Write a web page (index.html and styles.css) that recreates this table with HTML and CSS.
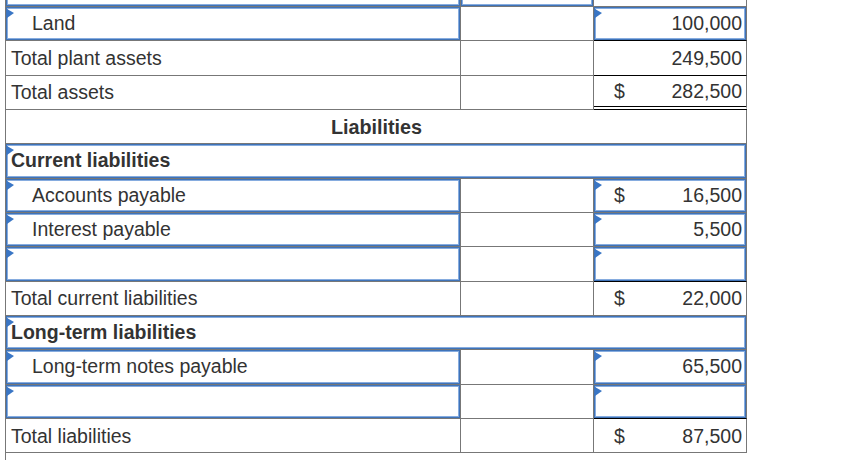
FILE: index.html
```html
<!DOCTYPE html>
<html lang="en">
<head>
<meta charset="utf-8">
<title>Balance sheet</title>
<link rel="stylesheet" href="styles.css">
</head>
<body>
<div class="page">
<table class="sheet">
  <tr>
    <td class="w1 in"><div class="inp"></div></td>
    <td class="w2 in"><div class="inp"></div></td>
    <td class="w3"></td>
  </tr>
  <tr>
    <td class="in"><div class="inp ind">Land</div></td>
    <td></td>
    <td class="in ul"><div class="inp amt"><span class="num">100,000</span></div></td>
  </tr>
  <tr>
    <td>Total plant assets</td>
    <td></td>
    <td class="ul"><div class="amt"><span class="num">249,500</span></div></td>
  </tr>
  <tr>
    <td>Total assets</td>
    <td></td>
    <td class="dbl"><div class="amt"><span class="dol">$</span><span class="num">282,500</span></div></td>
  </tr>
  <tr>
    <td class="hd" colspan="3">Liabilities</td>
  </tr>
  <tr>
    <td class="in" colspan="3"><div class="inp bold">Current liabilities</div></td>
  </tr>
  <tr>
    <td class="in"><div class="inp ind">Accounts payable</div></td>
    <td></td>
    <td class="in"><div class="inp amt"><span class="dol">$</span><span class="num">16,500</span></div></td>
  </tr>
  <tr>
    <td class="in"><div class="inp ind">Interest payable</div></td>
    <td></td>
    <td class="in"><div class="inp amt"><span class="num">5,500</span></div></td>
  </tr>
  <tr>
    <td class="in"><div class="inp"></div></td>
    <td></td>
    <td class="in ul"><div class="inp amt"></div></td>
  </tr>
  <tr>
    <td>Total current liabilities</td>
    <td></td>
    <td><div class="amt"><span class="dol">$</span><span class="num">22,000</span></div></td>
  </tr>
  <tr>
    <td class="in" colspan="3"><div class="inp bold">Long-term liabilities</div></td>
  </tr>
  <tr>
    <td class="in"><div class="inp ind">Long-term notes payable</div></td>
    <td></td>
    <td class="in"><div class="inp amt"><span class="num">65,500</span></div></td>
  </tr>
  <tr>
    <td class="in"><div class="inp"></div></td>
    <td></td>
    <td class="in ul"><div class="inp amt"></div></td>
  </tr>
  <tr>
    <td>Total liabilities</td>
    <td></td>
    <td><div class="amt"><span class="dol">$</span><span class="num">87,500</span></div></td>
  </tr>
  <tr>
    <td class="last" colspan="3"></td>
  </tr>
</table>
</div>
</body>
</html>
```

FILE: styles.css
```css
html, body {
  margin: 0;
  padding: 0;
  background: #fff;
}

body {
  font-family: "Liberation Sans", Arial, sans-serif;
  font-size: 19.5px;
  color: #333;
}

.page {
  height: 460px;
  overflow: hidden;
  padding-left: 5px;
}

.sheet {
  border-collapse: separate;
  border-spacing: 0;
  table-layout: fixed;
  width: 742px;
  border-left: 1px solid #777;
  margin-top: -27.33px;
}

.sheet td {
  box-sizing: border-box;
  height: 34.33px;
  padding: 1px 4px 0 5px;
  border-right: 1px solid #777;
  border-bottom: 1px solid #777;
  vertical-align: middle;
  white-space: nowrap;
  overflow: hidden;
}

.sheet td.w1 { width: 455px; }
.sheet td.w2 { width: 133px; }
.sheet td.w3 { width: 153px; }

.sheet td.in {
  padding: 0;
}

.sheet td.ul {
  border-bottom-color: #000;
}

.sheet td.dbl {
  border-bottom: 4px double #000;
}

.sheet td.hd {
  text-align: center;
  font-weight: bold;
  font-size: 19.8px;
}

.sheet td.last {
  border-right: none;
}

.inp {
  position: relative;
  box-sizing: border-box;
  height: 33.33px;
  border: 1px solid #3f73b8;
  box-shadow: inset 0 0 0 1px #86acdf;
  padding: 0 3px 0 4px;
  display: flex;
  align-items: center;
}

.inp::before {
  content: "";
  position: absolute;
  left: 0;
  top: 1px;
  border-left: 7px solid #3a76c5;
  border-top: 4px solid transparent;
  border-bottom: 5px solid transparent;
}

.ind {
  padding-left: 25px;
}

.bold {
  font-weight: bold;
}

.amt {
  display: flex;
  align-items: center;
}

.dol {
  margin-left: 15px;
}

.num {
  margin-left: auto;
}
```
